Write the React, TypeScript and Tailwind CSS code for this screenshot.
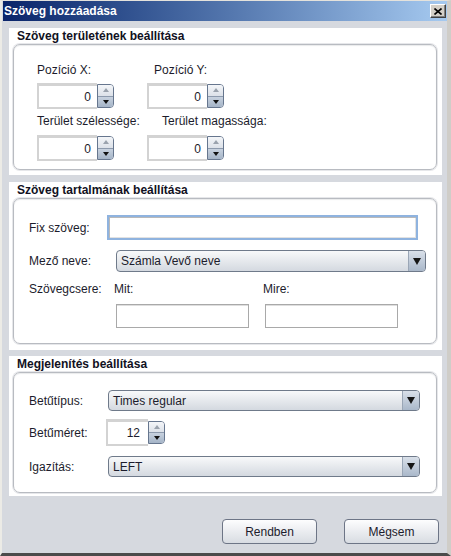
import React from "react";

const txt = "text-[12px] leading-[14px] text-[#1c1c2c]";

const Label = ({ children, className = "" }: { children: React.ReactNode; className?: string }) => (
  <div className={`${txt} h-[14px] whitespace-nowrap ${className}`}>{children}</div>
);

const Spinner = ({
  value,
  fieldW = 60,
  tall = false,
  className = "",
}: {
  value: string;
  fieldW?: number;
  tall?: boolean;
  className?: string;
}) => (
  <div className={`flex items-center ${className}`}>
    <div
      className={`bg-white border-2 border-t-[3px] border-[#d3d3d3] border-r-0 flex items-center justify-end ${
        tall ? "h-[27px] pr-[8px]" : "h-[26px] pr-[6px]"
      } ${txt}`}
      style={{ width: fieldW }}
    >
      {value}
    </div>
    <div
      className={`w-[17px] flex flex-col border border-[#66768e] rounded-r-[4px] overflow-hidden ${
        tall ? "h-[23px]" : "h-[24px]"
      }`}
    >
      <div className="flex-1 flex items-center justify-center bg-linear-to-b from-[#f4f6f9] to-[#dce1e8] border-b border-[#8d9aad]">
        <svg width="6" height="4" viewBox="0 0 6 4">
          <path d="M3 0 L6 4 L0 4 Z" fill="#9aa2ad" />
        </svg>
      </div>
      <div className="flex-1 flex items-center justify-center bg-linear-to-b from-[#c8d2df] to-[#a5b4c7]">
        <svg width="6" height="4" viewBox="0 0 6 4">
          <path d="M0 0 L6 0 L3 4 Z" fill="#111" />
        </svg>
      </div>
    </div>
  </div>
);

const Combo = ({ value, w, h }: { value: string; w: number; h: number }) => (
  <div
    className="flex border border-[#6f7a8a] rounded-[4px] overflow-hidden bg-linear-to-b from-[#f8f9fa] to-[#d4d9e0]"
    style={{ width: w, height: h }}
  >
    <div className={`flex-1 flex items-center pl-[4px] ${txt}`}>{value}</div>
    <div className="w-[17px] flex items-center justify-center border-l border-[#9aa6b6] bg-linear-to-b from-[#d9e0e9] to-[#aab8ca]">
      <svg width="8" height="7" viewBox="0 0 8 7">
        <path d="M0 0 L8 0 L4 7 Z" fill="#151515" />
      </svg>
    </div>
  </div>
);

const Field = ({ w, h, focused = false }: { w: number; h: number; focused?: boolean }) => (
  <div
    className={
      focused
        ? "bg-white border-2 border-[#8fb3df] shadow-[inset_1px_1px_0_#b9b9b9,inset_-1px_-1px_0_#e2e2e2]"
        : "bg-white border border-[#a9a9a9] shadow-[inset_0_1px_0_#dedede]"
    }
    style={{ width: w, height: h }}
  />
);

const Panel = ({
  title,
  className,
  boxClass,
  children,
}: {
  title: string;
  className: string;
  boxClass: string;
  children: React.ReactNode;
}) => (
  <div className={`ml-[7px] w-[433px] bg-white pt-[1px] flex flex-col ${className}`}>
    <div className="pl-[8px] h-[14px] text-[12px] leading-[14px] font-bold text-[#111122] whitespace-nowrap">
      {title}
    </div>
    <div
      className={`mt-[1px] ml-[4px] w-[424px] border border-[#b8bbc1] rounded-[7px] shadow-[0_0_0_1px_#e6e7ea,inset_0_1px_1px_#e9eaec] flex flex-col ${boxClass}`}
    >
      {children}
    </div>
  </div>
);

const Btn = ({ children }: { children: React.ReactNode }) => (
  <div
    className={`w-[95px] h-[25px] flex items-center justify-center border border-[#6d7586] rounded-[4px] bg-linear-to-b from-[#fdfdfe] to-[#d8dce2] ${txt}`}
  >
    {children}
  </div>
);

export default function App() {
  return (
    <div className="w-[451px] h-[556px] flex flex-col bg-[#d6d9df] border-t border-t-[#e4e2dc] border-l-2 border-l-[#ecebe6] border-r-4 border-r-[#cfcdc8] border-b-[3px] border-b-[#4b4b4b] font-['Liberation_Sans',Arial,sans-serif]">
      {/* title bar */}
      <div className="h-[20px] ml-[1px] flex items-center justify-between pl-[1px] pr-[1px] bg-linear-to-r from-[#0a246a] to-[#a6caf0]">
        <span className="text-white font-bold text-[12px] leading-[14px]">Szöveg hozzáadása</span>
        <div className="w-[16px] h-[14px] bg-[#d4d0c8] border border-t-white border-l-white border-r-[#404040] border-b-[#404040] shadow-[inset_-1px_-1px_0_#808080] flex items-center justify-center">
          <svg width="8" height="7" viewBox="0 0 8 7">
            <path d="M0.5 0.5 L7.5 6.5 M7.5 0.5 L0.5 6.5" stroke="#000" strokeWidth="1.6" />
          </svg>
        </div>
      </div>

      <Panel title="Szöveg területének beállítása" className="mt-[7px] h-[147px]" boxClass="h-[126px]">
        <div className="flex pt-[18px] pl-[23px]">
          <div className="flex flex-col w-[110px]">
            <Label>Pozíció X:</Label>
            <Spinner value="0" className="mt-[6px]" />
            <Label className="mt-[5px]">Terület szélessége:</Label>
            <Spinner value="0" className="mt-[7px]" />
          </div>
          <div className="flex flex-col">
            <Label className="ml-[7px]">Pozíció Y:</Label>
            <Spinner value="0" className="mt-[6px]" />
            <Label className="mt-[5px] ml-[15px]">Terület magassága:</Label>
            <Spinner value="0" className="mt-[7px]" />
          </div>
        </div>
      </Panel>

      <Panel title="Szöveg tartalmának beállítása" className="mt-[7px] h-[168px]" boxClass="h-[146px]">
        <div className="flex flex-col pl-[15px]">
          <div className="flex items-center mt-[16px]">
            <Label className="w-[78px]">Fix szöveg:</Label>
            <Field w={311} h={25} focused />
          </div>
          <div className="flex items-center mt-[10px]">
            <Label className="w-[87px]">Mező neve:</Label>
            <Combo value="Számla Vevő neve" w={310} h={22} />
          </div>
          <div className="flex mt-[10px]">
            <Label className="w-[85px]">Szövegcsere:</Label>
            <Label className="w-[149px]">Mit:</Label>
            <Label>Mire:</Label>
          </div>
          <div className="flex mt-[8px] ml-[87px] gap-[16px]">
            <Field w={133} h={24} />
            <Field w={133} h={24} />
          </div>
        </div>
      </Panel>

      <Panel title="Megjelenítés beállítása" className="mt-[6px] h-[140px]" boxClass="h-[121px]">
        <div className="flex flex-col pl-[15px]">
          <div className="flex items-center mt-[17px]">
            <Label className="w-[79px]">Betűtípus:</Label>
            <Combo value="Times regular" w={312} h={21} />
          </div>
          <div className="flex items-center mt-[8px]">
            <Label className="w-[77px]">Betűméret:</Label>
            <Spinner value="12" fieldW={42} tall />
          </div>
          <div className="flex items-center mt-[10px]">
            <Label className="w-[79px]">Igazítás:</Label>
            <Combo value="LEFT" w={312} h={21} />
          </div>
        </div>
      </Panel>

      <div className="flex mt-[23px] ml-[220px] gap-[27px]">
        <Btn>Rendben</Btn>
        <Btn>Mégsem</Btn>
      </div>
    </div>
  );
}
